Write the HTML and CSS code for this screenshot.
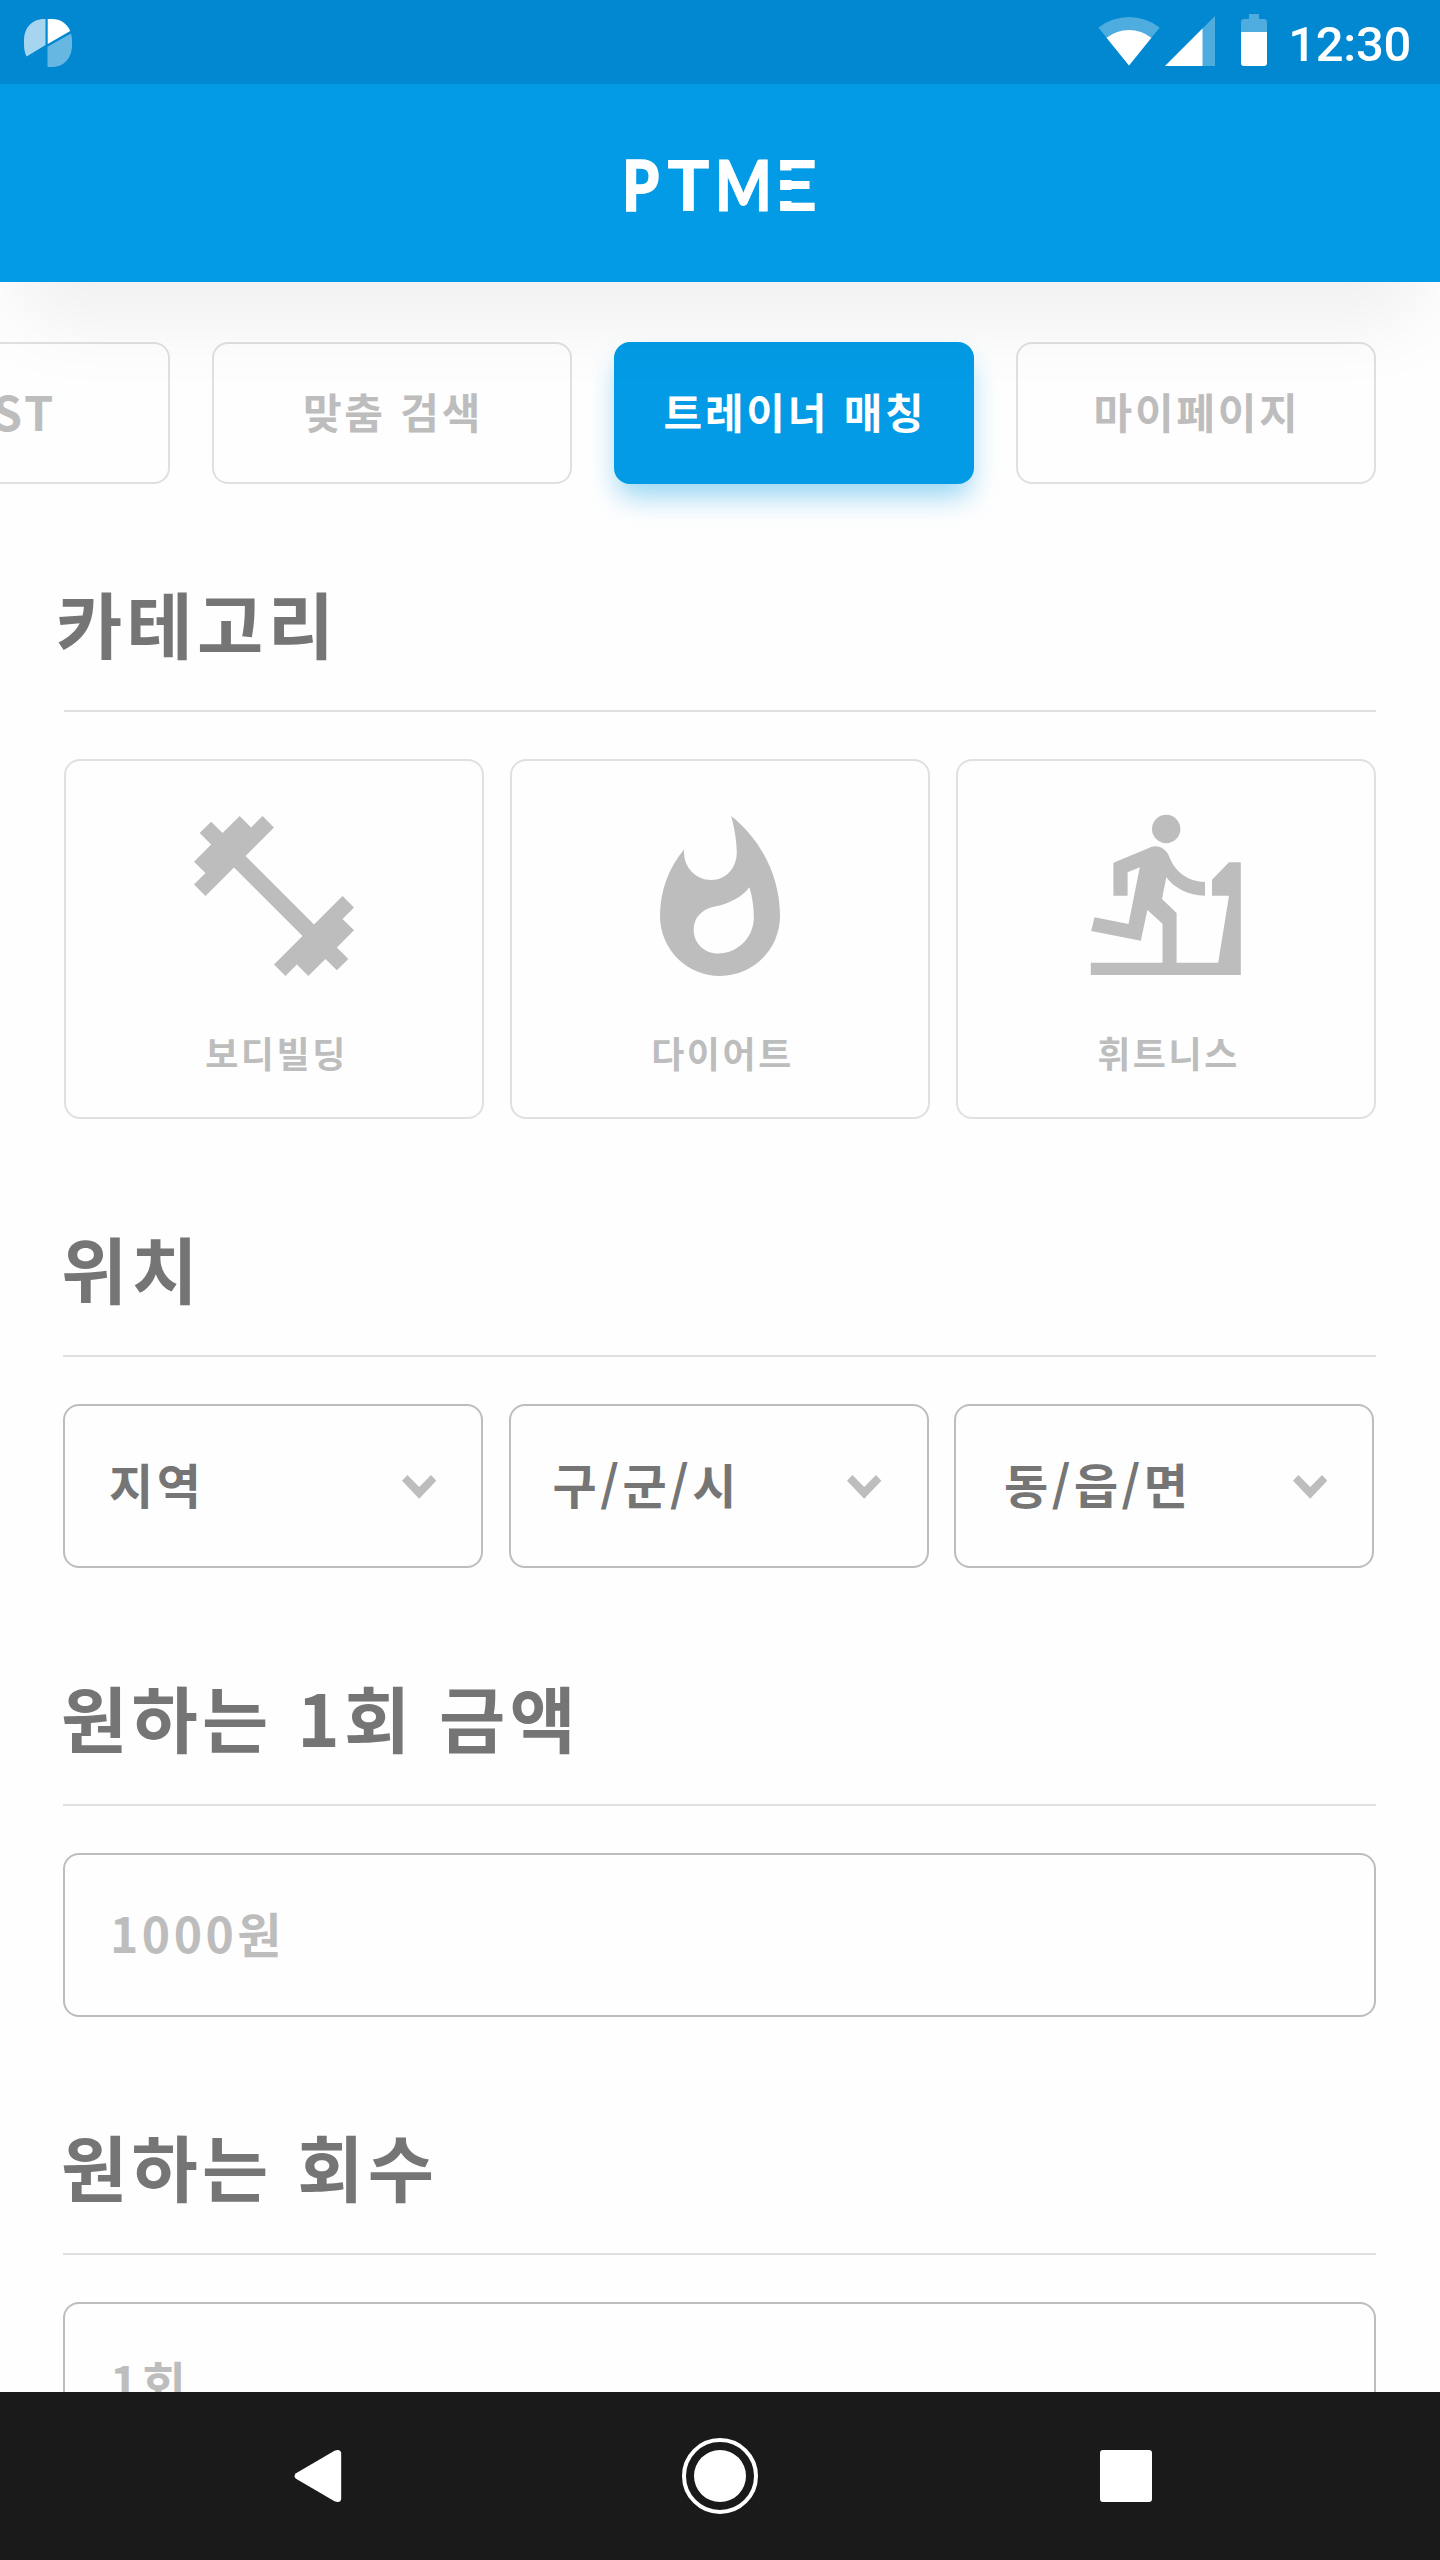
FILE: index.html
```html
<!DOCTYPE html>
<html lang="ko">
<head>
<meta charset="utf-8">
<title>PTME</title>
<link rel="stylesheet" href="styles.css">
</head>
<body>
<div class="screen">
  <header class="header">
    <div class="status">
      <svg class="status-app" width="48" height="48" viewBox="0 0 48 48" fill="#fff">
        <path opacity=".65" d="M21.500 0H20C8 0 0 9 0 21v4c0 5 .7 9 2.600 12.500L21.500 26z"/>
        <path d="M23.700 0H28c8.500 0 15 4.500 18.200 12L23.700 25z"/>
        <path opacity=".4" d="M47 14.500c.7 2.500 1 5 1 8V26c0 13-8 22-20 22h-4.500V27.800z"/>
      </svg>
      <div class="status-right">
        <svg width="170" height="54" viewBox="1098 13 170 54" fill="#fff">
          <path opacity=".3" d="M1129 65.500L1098.300 27.500A50 50 0 0 1 1159.700 27.500z"/>
          <path d="M1129 65.500L1106.600 37.800A36 36 0 0 1 1151.400 37.800z"/>
          <path opacity=".3" d="M1165 66L1215 16V66z"/>
          <path d="M1165 66L1202.500 28.500V66z"/>
          <path opacity=".3" d="M1249 14h10v5h5a3 3 0 0 1 3 3v10h-26V22a3 3 0 0 1 3-3h5z"/>
          <path d="M1241 32h26v31a3 3 0 0 1-3 3h-20a3 3 0 0 1-3-3z"/>
        </svg>
        <span class="clock">12:30</span>
      </div>
    </div>
    <div class="appbar">
      <svg class="logo" width="200" height="120" viewBox="620 122 200 120">
        <text class="logo-text logo-p" transform="translate(622.300 209.500) scale(.83 1)">P</text>
        <text class="logo-text" transform="translate(667 210)">T</text>
        <text class="logo-text logo-m" transform="translate(715 210) scale(.84 1)">M</text>
        <text class="logo-text" transform="translate(774.500 210) scale(1.050 1)">E</text>
        <path class="logo-cut" d="M776 169.500h42v9.500h-42zM776 189h42v11h-42z"/>
      </svg>
    </div>
  </header>

  <main class="content">
    <nav class="tabs">
      <a class="tab tab-latin">BEST</a>
      <a class="tab">맞춤 검색</a>
      <a class="tab tab-active">트레이너 매칭</a>
      <a class="tab">마이페이지</a>
    </nav>

    <section class="section section-category">
      <h2 class="title">카테고리</h2>
      <div class="cards">
        <div class="card">
          <svg class="card-icon" viewBox="0 0 24 24"><path d="M20.570 14.860L22 13.430 20.570 12 17 15.570 8.430 7 12 3.430 10.570 2 9.140 3.430 7.710 2 5.570 4.140 4.140 2.710 2.710 4.140l1.430 1.430L2 7.710l1.430 1.430L2 10.570 3.430 12 7 8.430 15.570 17 12 20.570 13.430 22l1.430-1.430L16.290 22l2.140-2.140 1.430 1.430 1.430-1.430-1.430-1.430L22 16.290z"/></svg>
          <span class="card-label">보디빌딩</span>
        </div>
        <div class="card">
          <svg class="card-icon" viewBox="-0.8 -1.467 25.6 25.6"><path d="M13.500.67s.74 2.650.74 4.800c0 2.060-1.350 3.730-3.410 3.730-2.070 0-3.630-1.670-3.630-3.730l.03-.36C5.210 7.510 4 10.620 4 14c0 4.420 3.580 8 8 8s8-3.580 8-8C20 8.610 17.410 3.800 13.500.67zM11.710 19c-1.780 0-3.220-1.400-3.220-3.140 0-1.620 1.050-2.760 2.810-3.120 1.770-.36 3.600-1.210 4.620-2.580.39 1.290.59 2.650.59 4.040 0 2.650-2.150 4.800-4.800 4.800z"/></svg>
          <span class="card-label">다이어트</span>
        </div>
        <div class="card">
          <svg class="card-icon" viewBox="1070 800 192 192">
            <circle cx="1166.200" cy="829" r="14.200"/>
            <path d="M1113.400 862.700L1148.300 848.300Q1154 844.800 1160 847Q1165 849 1168 854C1170.500 859 1172 864 1176 868.500C1183 877 1194 882 1205 882V895.700C1189 895.700 1174 888 1166.300 877.300L1162 899L1176.600 913V962.700H1218.200L1229 895.700H1212V879.700L1229 862.300H1240.800V975H1090.800V962.700H1162.500V923.700L1147.400 910L1140.800 940.700L1091.200 931L1094.500 917.300L1128.500 924L1139.800 867.300L1127.600 872.300V895.700H1113.400Z"/>
          </svg>
          <span class="card-label">휘트니스</span>
        </div>
      </div>
    </section>

    <section class="section">
      <h2 class="title">위치</h2>
      <div class="selects">
        <div class="field"><span>지역</span><svg class="chevron" viewBox="0 0 34.400 24"><path d="M0 5.700L5.400 0 17.200 11.900 29 0l5.400 5.700-17.200 18z"/></svg></div>
        <div class="field field-middle"><span>구/군/시</span><svg class="chevron" viewBox="0 0 34.400 24"><path d="M0 5.700L5.400 0 17.200 11.900 29 0l5.400 5.700-17.200 18z"/></svg></div>
        <div class="field field-last"><span>동/읍/면</span><svg class="chevron" viewBox="0 0 34.400 24"><path d="M0 5.700L5.400 0 17.200 11.900 29 0l5.400 5.700-17.200 18z"/></svg></div>
      </div>
    </section>

    <section class="section">
      <h2 class="title">원하는 1회 금액</h2>
      <div class="field field-input"><span>1000원</span></div>
    </section>

    <section class="section">
      <h2 class="title">원하는 회수</h2>
      <div class="field field-input"><span>1회</span></div>
    </section>
  </main>

  <footer class="navbar">
    <svg width="48" height="54" viewBox="0 0 48 54" fill="#fff"><path d="M2 24.200L40.500 1.700Q46.800-.6 47.200 4.500V49.500Q46.800 54.600 40.500 52.300L2 29.800Q-1 27 2 24.200z"/></svg>
    <svg width="76" height="76" viewBox="0 0 76 76"><circle cx="38" cy="38" r="36" fill="none" stroke="#fff" stroke-width="4"/><circle cx="38" cy="38" r="26" fill="#fff"/></svg>
    <svg class="nav-recent" width="52" height="52" viewBox="0 0 52 52"><rect width="52" height="52" rx="3" fill="#fff"/></svg>
  </footer>
</div>
</body>
</html>
```
FILE: styles.css
```css
* { box-sizing: border-box; }

body {
  margin: 0;
  background: #fefefe;
  font-family: "Noto Sans CJK KR", sans-serif;
  font-weight: 700;
}

svg { display: block; flex: none; }

.screen {
  width: 1440px;
  height: 2560px;
  display: flex;
  flex-direction: column;
  overflow: hidden;
}

.header {
  position: relative;
  z-index: 1;
  flex: none;
  box-shadow: 0 60px 76px -20px rgba(0, 0, 0, 0.06);
}

.status {
  height: 84px;
  padding: 0 29px 0 24px;
  display: flex;
  align-items: center;
  justify-content: space-between;
  background: #0288d1;
}

.status-app { margin-top: 2px; }

.status-right {
  display: flex;
  align-items: center;
  gap: 20px;
  height: 84px;
}

.status-right svg { margin-top: -4px; }

.clock {
  font: 500 49px/84px Roboto, sans-serif;
  letter-spacing: -0.3px;
  color: #fff;
  margin-top: 5px;
}

.appbar {
  height: 198px;
  display: flex;
  align-items: center;
  justify-content: center;
  background: #039be5;
}

.logo-text {
  font: 900 71px Lato, sans-serif;
  fill: #fff;
}

.logo-p { stroke: #fff; stroke-width: 1.5px; }

.logo-m { stroke: #fff; stroke-width: 0.8px; }

.logo-cut { fill: #039be5; }

.content {
  flex: 1;
  min-height: 0;
  overflow: hidden;
}

.tabs {
  display: flex;
  gap: 42px;
  margin: 60px 0 0 -190px;
}

.tab {
  flex: none;
  width: 360px;
  height: 142px;
  padding: 0 0 5px 2px;
  display: flex;
  align-items: center;
  justify-content: center;
  border: 2px solid #e0e0e0;
  border-radius: 16px;
  color: #bdbdbd;
  font-size: 42px;
  letter-spacing: 0.066em;
}

.tab-latin { font-size: 47px; }

.tab-active {
  background: #039be5;
  border-color: #039be5;
  color: #fff;
  box-shadow: 0 16px 28px -4px rgba(3, 155, 229, 0.42);
}

.section {
  height: 449px;
  padding: 0 64px 0 63px;
}

.section-category {
  height: 645px;
  padding-left: 64px;
  margin-top: 81px;
}

.title {
  margin: 0 0 47px;
  height: 147px;
  border-bottom: 2px solid #e0e0e0;
  font-size: 72px;
  line-height: 114px;
  letter-spacing: 0.06em;
  text-indent: -2px;
  color: #757575;
}

.section-category .title { text-indent: -8px; }

.cards { display: flex; gap: 26px; }

.card {
  width: 420px;
  height: 360px;
  padding-top: 39px;
  border: 2px solid #e0e0e0;
  border-radius: 16px;
  display: flex;
  flex-direction: column;
  align-items: center;
}

.card-icon { width: 192px; height: 192px; fill: #bdbdbd; }

.card-label {
  margin: 34px 0 0 5px;
  color: #bdbdbd;
  font-size: 36px;
  line-height: 52px;
  letter-spacing: 0.07em;
}

.selects { display: flex; gap: 25.5px; }

.field {
  width: 420px;
  height: 164px;
  padding: 0 45px 6px 44px;
  border: 2px solid #bdbdbd;
  border-radius: 16px;
  display: flex;
  align-items: center;
  justify-content: space-between;
  color: #757575;
  font-size: 48px;
  letter-spacing: 0.073em;
}

.field-middle { padding-left: 42px; }

.field-last { padding-left: 48px; }

.field-input { width: 1313px; padding-left: 45px; color: #bdbdbd; }

.chevron { width: 34.4px; height: 24px; margin-top: 7px; fill: #bdbdbd; }

.navbar {
  flex: none;
  height: 168px;
  padding-left: 294px;
  display: flex;
  align-items: center;
  gap: 340px;
  background: #1a1a1a;
}

.nav-recent { margin-left: 2px; }
```
